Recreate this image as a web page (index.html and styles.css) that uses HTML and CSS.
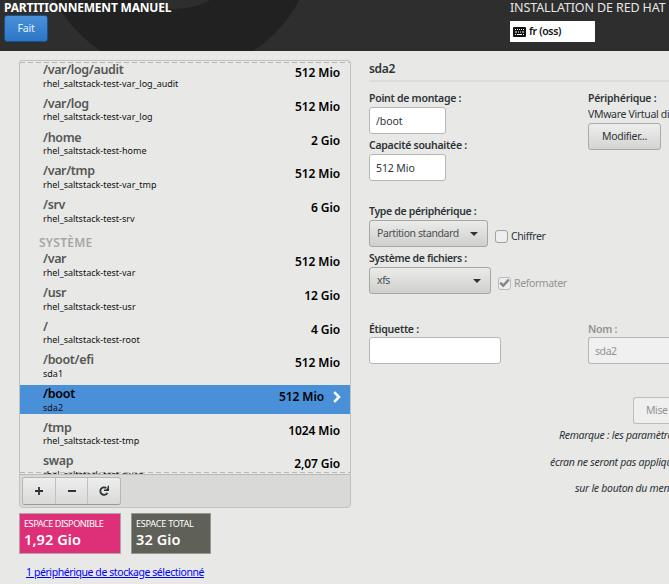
FILE: index.html
```html
<!DOCTYPE html>
<html lang="fr">
<head>
<meta charset="utf-8">
<title>Partitionnement manuel</title>
<link rel="stylesheet" href="styles.css">
</head>
<body>
<header class="top">
  <svg class="backdrop" width="669" height="51" viewBox="0 0 669 51"><circle cx="177" cy="-64" r="138" fill="#212121"/><circle cx="175" cy="-64" r="73" fill="#2e2e2e"/></svg>
  <div class="top-left"><h1>PARTITIONNEMENT MANUEL</h1><button class="done">Fait</button></div>
  <div class="top-right"><div class="product">INSTALLATION DE RED HAT</div>
    <div class="keyboard"><svg width="13" height="10" viewBox="0 0 13 10"><rect width="13" height="10" rx="1" fill="#111"/><path d="M2 2.5h1M4 2.5h1M6 2.5h1M8 2.5h1M10 2.5h1M2 5h2M5 5h1M7 5h1M9 5h2M2 7.5h1M4 7.5h5M10 7.5h1" stroke="#fff" stroke-width="1.2"/></svg><span>fr (oss)</span></div>
  </div>
</header>
<main>
  <section class="left">
    <div class="panel">
      <div class="list">
        <div class="row"><div><b>/var/log/audit</b><small>rhel_saltstack-test-var_log_audit</small></div><strong>512 Mio</strong></div>
        <div class="row"><div><b>/var/log</b><small>rhel_saltstack-test-var_log</small></div><strong>512 Mio</strong></div>
        <div class="row"><div><b>/home</b><small>rhel_saltstack-test-home</small></div><strong>2 Gio</strong></div>
        <div class="row"><div><b>/var/tmp</b><small>rhel_saltstack-test-var_tmp</small></div><strong>512 Mio</strong></div>
        <div class="row"><div><b>/srv</b><small>rhel_saltstack-test-srv</small></div><strong>6 Gio</strong></div>
        <div class="group">SYSTÈME</div>
        <div class="row"><div><b>/var</b><small>rhel_saltstack-test-var</small></div><strong>512 Mio</strong></div>
        <div class="row"><div><b>/usr</b><small>rhel_saltstack-test-usr</small></div><strong>12 Gio</strong></div>
        <div class="row"><div><b>/</b><small>rhel_saltstack-test-root</small></div><strong>4 Gio</strong></div>
        <div class="row"><div><b>/boot/efi</b><small>sda1</small></div><strong>512 Mio</strong></div>
        <div class="row selected"><div><b>/boot</b><small>sda2</small></div><strong>512 Mio</strong><svg width="8" height="12" viewBox="0 0 8 12"><path d="M1.2 1.2L6 6 1.2 10.8" fill="none" stroke="#fff" stroke-width="2.6"/></svg></div>
        <div class="row"><div><b>/tmp</b><small>rhel_saltstack-test-tmp</small></div><strong>1024 Mio</strong></div>
        <div class="row"><div><b>swap</b><small>rhel_saltstack-test-swap</small></div><strong>2,07 Gio</strong></div>
      </div>
      <div class="toolbar"><div class="tools">
        <button><svg width="12" height="12" viewBox="0 0 12 12"><path d="M2 6h8M6 2v8" stroke="#2e3436" stroke-width="1.8"/></svg></button>
        <button><svg width="12" height="12" viewBox="0 0 12 12"><path d="M2 6h8" stroke="#2e3436" stroke-width="1.8"/></svg></button>
        <button><svg width="12" height="12" viewBox="0 0 12 12"><path d="M8.3 3A3.8 3.8 0 1 0 9.5 7.8" fill="none" stroke="#2e3436" stroke-width="1.8"/><path d="M11 .8V6H6V4.6h2L9.6 3V.8z" fill="#2e3436"/></svg></button>
      </div></div>
    </div>
    <div class="spaces">
      <div class="space free"><span>ESPACE DISPONIBLE</span><b>1,92 Gio</b></div>
      <div class="space total"><span>ESPACE TOTAL</span><b>32 Gio</b></div>
    </div>
    <a class="storage" href="#">1 périphérique de stockage sélectionné</a>
  </section>
  <section class="details">
    <h2>sda2</h2>
    <div class="grid">
      <div class="block mount">
        <label>Point de montage :</label><div class="input">/boot</div>
        <label>Capacité souhaitée :</label><div class="input">512 Mio</div>
      </div>
      <div class="block device">
        <label>Périphérique :</label><div class="disk">VMware Virtual disk</div><button class="modify">Modifier...</button>
      </div>
      <div class="block types">
        <label>Type de périphérique :</label>
        <div class="line"><div class="combo type"><span>Partition standard</span><i></i></div><div class="check"><em></em><span>Chiffrer</span></div></div>
        <label>Système de fichiers :</label>
        <div class="line"><div class="combo fs"><span>xfs</span><i></i></div><div class="check off"><em><svg width="11" height="10" viewBox="0 0 11 10"><path d="M1.2 4.6L4.2 7.6 9.8 1.6" fill="none" stroke="#85898a" stroke-width="2.5"/></svg></em><span>Reformater</span></div></div>
      </div>
      <div class="block tag"><label>Étiquette :</label><div class="input wide"></div></div>
      <div class="block name"><label>Nom :</label><div class="input disabled">sda2</div></div>
    </div>
    <button class="update">Mise à jour</button>
    <div class="note"><p class="n1">Remarque : les paramètres</p><p class="n2">écran ne seront pas appliqués</p><p class="n3">sur le bouton du menu</p></div>
  </section>
</main>
</body>
</html>
```
FILE: styles.css
```css
* { box-sizing: border-box; }
html, body { width: 669px; height: 584px; margin: 0; overflow: hidden; }
body { background: #e8e8e7; color: #2e3436; font: 10.5px/15px "Noto Sans", "Open Sans", sans-serif; letter-spacing: -0.42px; }
button { font: inherit; letter-spacing: inherit; color: inherit; padding: 0; }
h1, h2, p { margin: 0; }
label, small, span, b { white-space: nowrap; }
.top { position: relative; height: 51px; background: #2e2e2e; color: #fff; display: flex; overflow: hidden; }
.backdrop { position: absolute; top: 0; left: 0; }
.top-left { position: relative; width: 510px; padding-left: 4px; }
h1 { font-size: 12px; line-height: 15px; font-weight: 700; letter-spacing: -0.2px; }
.done { display: block; width: 44px; height: 27px; margin: 0; color: #e6effa; letter-spacing: -0.2px; border: 1px solid #1c5187; border-radius: 3px; background: linear-gradient(#4a90d9, #2a76c6); }
.product { font-size: 12.5px; line-height: 15px; white-space: nowrap; color: #e6e6e6; letter-spacing: -0.12px; overflow: hidden; }
.top-right { position: relative; width: 159px; }
.keyboard { width: 85px; height: 21px; margin-top: 6px; padding-left: 3px; background: #fff; color: #111; display: flex; align-items: center; gap: 3px; font-weight: 600; letter-spacing: -0.35px; }
main { display: flex; padding: 9px 0 0 19px; }
.left { width: 350px; flex: none; }
.panel { width: 332px; height: 448px; border: 1px solid #c2c3c1; border-radius: 3px 3px 4px 4px; background: #d9d9d8; overflow: hidden; letter-spacing: 0; }
.list { height: 413px; padding-top: 0.3px; overflow: hidden; background: repeating-linear-gradient(90deg, #b8b9b7 0 5px, transparent 5px 8px) 0 1px / 100% 1px no-repeat, repeating-linear-gradient(90deg, #b8b9b7 0 5px, transparent 5px 8px) 0 411px / 100% 1px no-repeat, #e8e8e7; }
.row { height: 29px; margin-bottom: 4.7px; padding: 0 10px 0 23px; display: flex; }
.row > div { flex: 1; }
.row b { display: block; font-size: 12.5px; line-height: 18px; font-weight: 600; color: #555855; letter-spacing: -0.35px; }
.row small { display: block; margin-top: -1.5px; font-size: 9px; line-height: 11px; color: #111; }
.row strong { font-size: 12px; line-height: 24px; font-weight: 600; color: #000; letter-spacing: -0.1px; }
.selected { background: #4a90d9; }
.row.selected b { color: #000; letter-spacing: -0.25px; }
.selected svg { margin: 6px -1px 0 9px; }
.group { height: 20.6px; padding: 5px 0 0 19px; color: #a6a7a5; font-size: 12px; line-height: 16px; font-weight: 600; letter-spacing: 0.25px; }
.toolbar { height: 33px; border-top: 1px solid #bcbdbb; padding: 2px; }
.tools { width: 99px; height: 28px; display: flex; border: 1px solid #b5b7b3; border-bottom-color: #979a95; border-radius: 3px; overflow: hidden; }
.tools button { flex: 1; display: flex; align-items: center; justify-content: center; border: 0; border-right: 1px solid #c0c1bf; background: linear-gradient(#eee, #d9d9d8); }
.tools button:last-child { border-right: 0; }
.spaces { display: flex; gap: 10px; margin-top: 5px; letter-spacing: -0.2px; }
.space { height: 41px; padding: 4px; color: #fff; border: 1px solid #b3a3a9; }
.space span { display: block; font-size: 9.2px; line-height: 12px; letter-spacing: -0.3px; }
.free span { letter-spacing: -0.46px; }
.space.free span { letter-spacing: -0.5px; }
.space b { display: block; font-size: 14.5px; line-height: 18px; font-weight: 600; letter-spacing: 0.1px; }
.space.free { width: 102px; background: #de3079; }
.total { width: 80px; background: #5f6058; border-color: #96978f; }
.storage { display: inline-block; margin: 11px 0 0 7px; color: #00f; white-space: nowrap; }
.details { width: 300px; flex: none; overflow: hidden; }
h2 { height: 22px; font-size: 12px; line-height: 18px; font-weight: 600; letter-spacing: -0.3px; border-bottom: 2px solid #dcdcdb; }
label { display: block; font-size: 10.5px; line-height: 15px; height: 16px; font-weight: 600; letter-spacing: -0.27px; }
.grid { display: grid; grid-template-columns: 219px 81px; grid-template-rows: 113px 117px 70px; padding-top: 9px; }
.types { grid-column: 1 / 3; }
.types label { letter-spacing: -0.33px; }
.tag label, .name label { line-height: 17px; }
.input { width: 77px; height: 27px; padding-left: 6px; border: 1px solid #b6b7b5; border-radius: 3px; background: #fff; line-height: 26px; letter-spacing: -0.1px; }
.input + label, .line + label { margin-top: 4px; }
.wide { width: 132px; }
.disk { height: 16px; line-height: 15px; white-space: nowrap; overflow: hidden; letter-spacing: -0.33px; }
.modify { width: 73px; height: 27px; border: 1px solid #a9aba7; border-radius: 3px; background: linear-gradient(#eee, #d4d4d3); letter-spacing: -0.3px; }
.line { display: flex; gap: 8px; }
.combo { height: 27px; padding: 0 9px 0 7px; display: flex; align-items: center; justify-content: space-between; border: 1px solid #a5a7a3; border-radius: 3px; background: linear-gradient(#ebebea, #cfcfce); color: #4b5051; }
.type { width: 119px; }
.fs { width: 122px; }
.combo i { border: 4px solid transparent; border-top-color: #2e3436; border-bottom: 0; }
.check { display: flex; align-items: center; gap: 3px; padding-top: 5px; }
.line .check { margin-left: -1px; }
.check em { width: 13px; height: 13px; border: 1px solid #9fa19d; border-radius: 3px; background: #eee; display: flex; align-items: center; justify-content: center; }
.check span { letter-spacing: -0.38px; }
.off, .name { color: #929595; }
.off em { border-color: #bbbcb9; }
.name .disabled { width: 81px; background: #f0f0f0; border-right: 0; border-radius: 3px 0 0 3px; letter-spacing: -0.42px; }
.update { display: block; width: 36px; height: 27px; margin: 6px 0 0 264px; padding-left: 12px; text-align: left; border: 1px solid #bdbebb; border-right: 0; border-radius: 3px 0 0 3px; background: #efefef; color: #929595; white-space: nowrap; overflow: hidden; letter-spacing: -0.4px; }
.note { font-style: italic; line-height: 26.5px; white-space: nowrap; margin-top: -2px; letter-spacing: -0.28px; }
.note p { overflow: hidden; }
.n1 { padding-left: 190px; }
.n2 { padding-left: 181px; }
.n3 { padding-left: 206px; }
```
